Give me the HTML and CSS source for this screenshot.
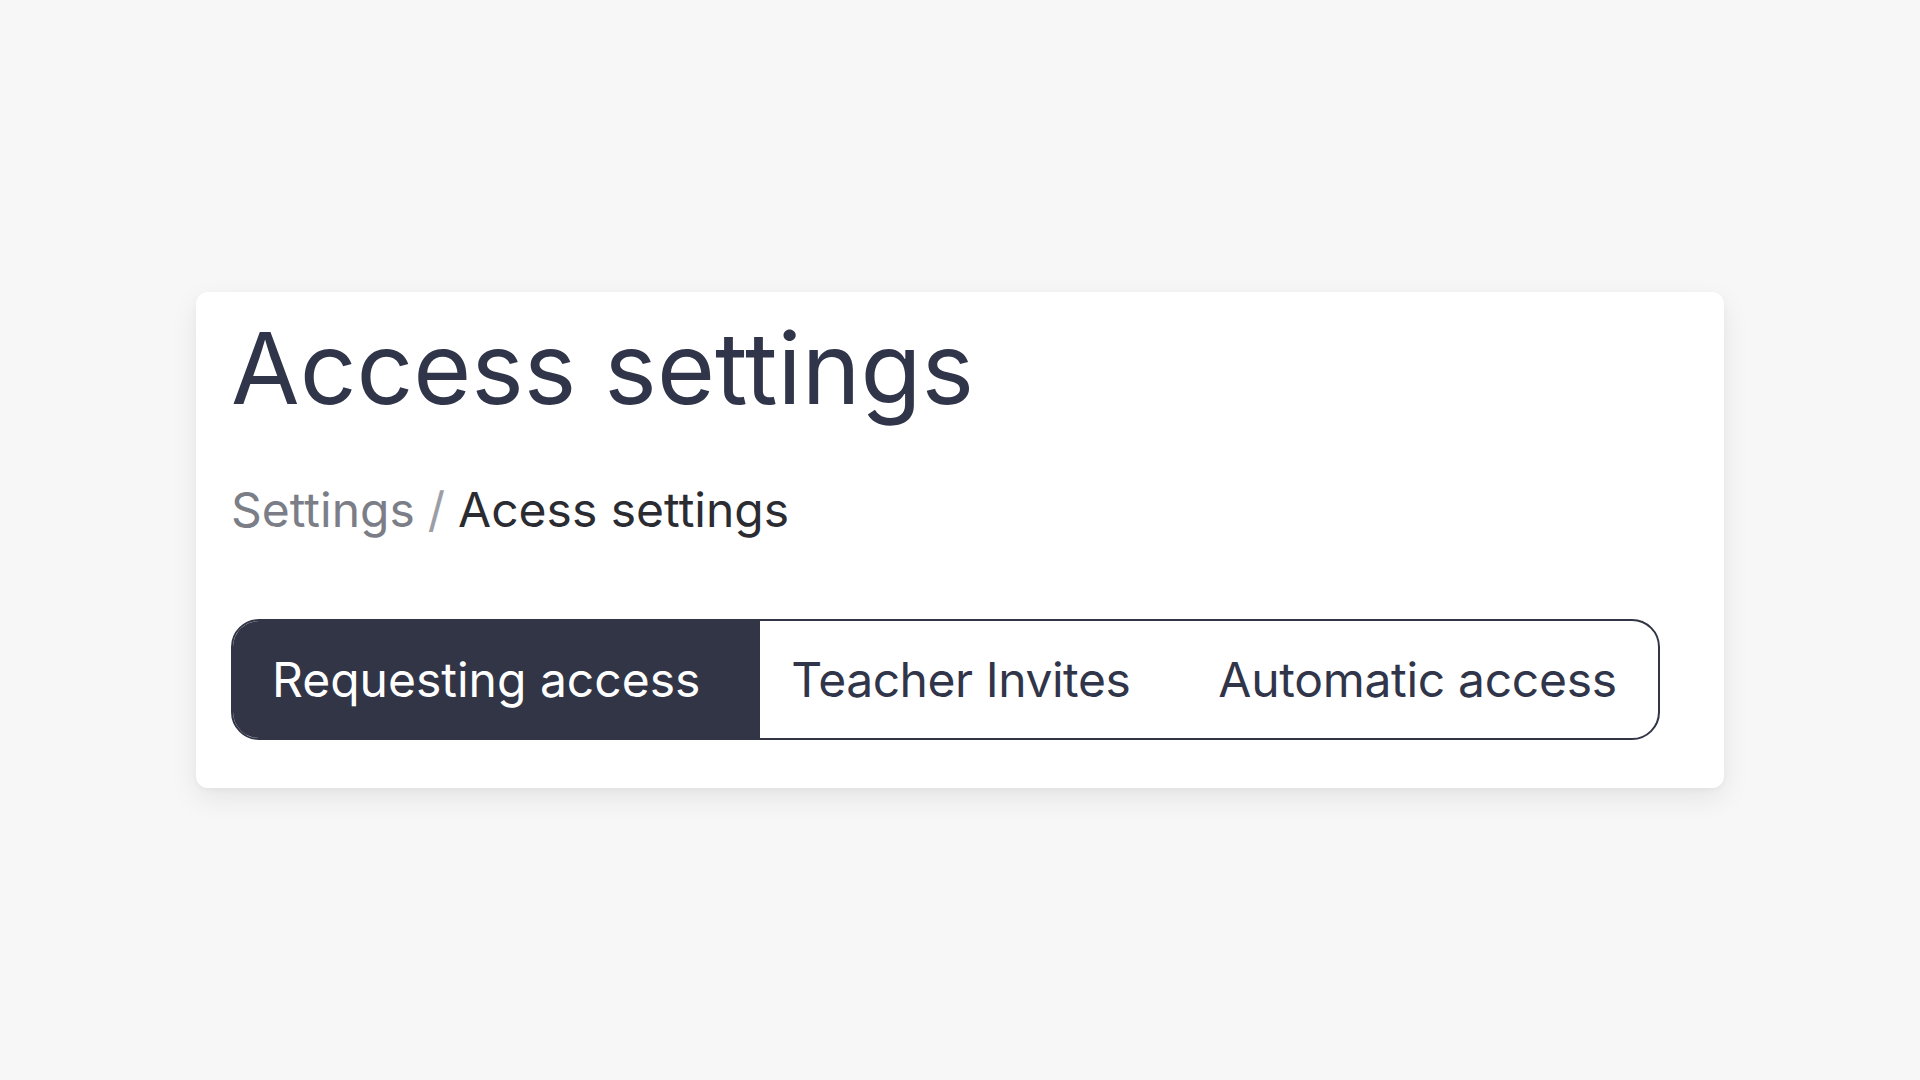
FILE: index.html
```html
<!DOCTYPE html>
<html lang="en">
<head>
<meta charset="utf-8">
<title>Access settings</title>
<link rel="stylesheet" href="styles.css">
</head>
<body>
<main class="page">
  <section class="card">
    <h1 class="title">Access settings</h1>
    <nav class="breadcrumb">
      <span class="crumb-muted">Settings</span>
      <span class="crumb-sep">/</span>
      <span class="crumb-current">Acess settings</span>
    </nav>
    <div class="segmented">
      <button class="tab tab-active">Requesting access</button>
      <button class="tab tab-mid">Teacher Invites</button>
      <button class="tab tab-last">Automatic access</button>
    </div>
  </section>
</main>
</body>
</html>
```

FILE: styles.css
```css
html, body {
  margin: 0;
  padding: 0;
  height: 100%;
}

body {
  background: #f7f7f7;
  font-family: Inter, "Noto Sans", "Liberation Sans", sans-serif;
  color: #31354a;
}

.page {
  min-height: 100vh;
  display: flex;
  align-items: center;
  justify-content: center;
}

.card {
  width: 1528px;
  box-sizing: border-box;
  background: #ffffff;
  border-radius: 12px;
  box-shadow: 0 10px 28px rgba(0, 0, 0, 0.08), 0 2px 6px rgba(0, 0, 0, 0.03);
  padding: 17px 35px 48px;
}

.title {
  margin: 0;
  font-size: 99.5px;
  font-weight: 400;
  line-height: 1.2;
  color: #31354a;
}

.breadcrumb {
  margin-top: 53px;
  font-size: 48px;
  line-height: 1.2;
  display: flex;
  gap: 13px;
}

.crumb-muted {
  color: #7b7e87;
}

.crumb-sep {
  color: #9c9ea5;
}

.crumb-current {
  color: #2b2c32;
}

.segmented {
  margin-top: 80px;
  display: inline-flex;
  border: 2px solid #323546;
  border-radius: 28px;
  overflow: hidden;
  background: #ffffff;
}

.tab {
  height: 117px;
  display: flex;
  align-items: center;
  border: 0;
  margin: 0;
  background: transparent;
  font-family: inherit;
  font-size: 48px;
  font-weight: 400;
  color: #31354a;
  cursor: pointer;
  white-space: nowrap;
}

.tab-active {
  background: #323546;
  color: #ffffff;
  padding: 0 60px 0 39px;
}

.tab-mid {
  letter-spacing: -0.45px;
  padding: 0 45px 0 31px;
}

.tab-last {
  letter-spacing: -0.3px;
  padding: 0 41px 0 43px;
}
```
